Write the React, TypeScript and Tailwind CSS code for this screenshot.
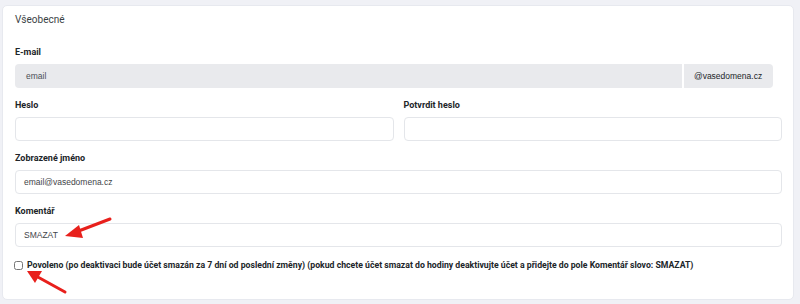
import { useState } from "react";

function Label({ children }: { children: React.ReactNode }) {
  return (
    <div className="h-[14px] mb-[5px] text-[9px] leading-[14px] font-bold text-[#212529] font-['Roboto',sans-serif]">
      {children}
    </div>
  );
}

function TextInput({ value = "" }: { value?: string }) {
  return (
    <div className="h-[24px] flex items-center px-[8px] bg-white border border-[#e4e6ea] rounded-[4px] text-[8.5px] text-[#3f4549] font-['Liberation_Sans',sans-serif]">
      {value}
    </div>
  );
}

function Arrows() {
  return (
    <svg className="absolute inset-0 pointer-events-none" width="800" height="304">
      <g stroke="#e8201c" strokeWidth="3" strokeLinecap="round" fill="#e8201c">
        <line x1="110" y1="219" x2="76" y2="232" />
        <polygon points="65,236 79,225 83,238" stroke="none" />
        <line x1="65" y1="292" x2="36" y2="276" />
        <polygon points="27,271 42,271 35,283" stroke="none" />
      </g>
    </svg>
  );
}

export default function App() {
  const [enabled, setEnabled] = useState(false);

  return (
    <div className="relative w-[800px] h-[304px] bg-[#f0f1f6] pt-[5px] pl-[2px] overflow-hidden">
      <div className="w-[792px] h-[295px] bg-white border border-[#e7e9ef] rounded-[5px] px-[12px]">
        <div className="pt-[6px] text-[10px] leading-[16px] text-[#3a3f45] font-['Roboto',sans-serif]">
          Všeobecné
        </div>

        <div className="mt-[17px]">
          <Label>E-mail</Label>
          <div className="flex w-[758px] h-[24px] gap-[2px]">
            <div className="flex-1 flex items-center px-[11px] bg-[#e9eaed] rounded-l-[4px] text-[8.5px] text-[#495057] font-['Liberation_Sans',sans-serif]">
              email
            </div>
            <div className="w-[89px] flex items-center px-[10px] bg-[#e9eaed] rounded-r-[4px] text-[8.5px] text-[#212529] font-['Liberation_Sans',sans-serif]">
              @vasedomena.cz
            </div>
          </div>
        </div>

        <div className="mt-[10px] flex gap-[10px] w-[767px]">
          <div className="flex-1">
            <Label>Heslo</Label>
            <TextInput />
          </div>
          <div className="flex-1">
            <Label>Potvrdit heslo</Label>
            <TextInput />
          </div>
        </div>

        <div className="mt-[10px] w-[767px]">
          <Label>Zobrazené jméno</Label>
          <TextInput value="email@vasedomena.cz" />
        </div>

        <div className="mt-[10px] w-[767px]">
          <Label>Komentář</Label>
          <TextInput value="SMAZAT" />
        </div>

        <label className="mt-[11px] flex items-center gap-[4px] whitespace-nowrap text-[8.7px] leading-[14px] font-bold text-[#212529] font-['Roboto',sans-serif]">
          <input
            type="checkbox"
            checked={enabled}
            onChange={() => setEnabled(!enabled)}
            className="w-[9px] h-[9px] m-0 ml-[-1px]"
          />
          Povoleno (po deaktivaci bude účet smazán za 7 dní od poslední změny) (pokud chcete účet smazat do hodiny deaktivujte účet a přidejte do pole Komentář slovo: SMAZAT)
        </label>
      </div>
      <Arrows />
    </div>
  );
}
